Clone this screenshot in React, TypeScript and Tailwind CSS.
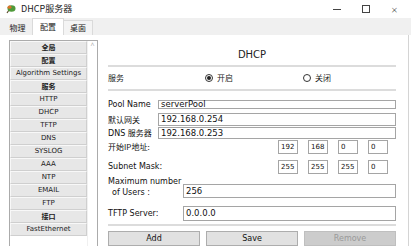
const latin = "font-['DejaVu_Sans','Noto_Sans_CJK_SC',sans-serif]";
const cjk = "font-['Noto_Sans_CJK_SC','DejaVu_Sans',sans-serif]";

const menu = [
  { label: "全局", bold: true },
  { label: "配置", bold: true },
  { label: "Algorithm Settings" },
  { label: "服务", bold: true },
  { label: "HTTP" },
  { label: "DHCP" },
  { label: "TFTP" },
  { label: "DNS" },
  { label: "SYSLOG" },
  { label: "AAA" },
  { label: "NTP" },
  { label: "EMAIL" },
  { label: "FTP" },
  { label: "接口", bold: true },
  { label: "FastEthernet" },
];

const Radio = ({ checked, label }: { checked?: boolean; label: string }) => (
  <div className="flex items-center gap-[4px]">
    <span className="w-[8px] h-[8px] rounded-full border border-[#333] flex items-center justify-center">
      {checked && <span className="w-[4px] h-[4px] rounded-full bg-[#222]" />}
    </span>
    <span className={`${cjk} text-[8px] leading-[10px] text-[#222]`}>{label}</span>
  </div>
);

const Field = ({ value, h }: { value: string; h: string }) => (
  <div
    className={`flex-1 ${h} border border-[#a5a5a5] bg-white flex items-center pl-[2px] text-[8.5px] text-[#111] ${latin} overflow-visible whitespace-nowrap`}
  >
    {value}
  </div>
);

const Octet = ({ value }: { value: string }) => (
  <div className={`w-[20px] h-[14px] border border-[#a5a5a5] bg-white flex items-center pl-[2px] text-[7px] text-[#111] ${latin}`}>
    {value}
  </div>
);

const Button = ({ label, disabled }: { label: string; disabled?: boolean }) => (
  <div
    className={`h-[15px] flex items-center justify-center text-[8px] ${latin} border ${
      disabled
        ? "bg-[#cccccc] border-[#bfbfbf] text-[#9a9a9a]"
        : "bg-[#e1e1e1] border-[#adadad] text-[#111]"
    }`}
  >
    {label}
  </div>
);

export default function App() {
  return (
    <div className="w-[411px] h-[246px] overflow-hidden bg-white flex flex-col">
      {/* title bar */}
      <div className="h-[18px] flex items-center shrink-0">
        <svg width="11" height="11" viewBox="0 0 11 11" className="ml-[5px]">
          <path d="M2 9 L4 6" stroke="#5a4a2a" strokeWidth="1.2" />
          <ellipse cx="6.5" cy="4.5" rx="4" ry="3.3" fill="#4f9a3a" />
          <ellipse cx="4.5" cy="3.2" rx="2" ry="1.6" fill="#d9742a" />
        </svg>
        <span className={`${cjk} ml-[5px] text-[9px] text-[#222]`}>DHCP服务器</span>
        <div className="ml-auto flex items-center text-[#444]">
          <span className="w-[29px] flex justify-center">
            <span className="w-[8px] h-px bg-[#444]" />
          </span>
          <span className="w-[29px] flex justify-center">
            <span className="w-[8px] h-[8px] border border-[#444]" />
          </span>
          <span className="w-[29px] mr-[2px] flex justify-center text-[11px] leading-none font-light">×</span>
        </div>
      </div>

      {/* tabs */}
      <div className="h-[17px] shrink-0 bg-[#f0f0f0] flex items-end pl-[3px]">
        <div className={`${cjk} w-[29px] h-[15px] flex items-center justify-center text-[8px] text-[#222]`}>物理</div>
        <div className={`${cjk} w-[32px] h-[17px] bg-white border-x border-t border-[#dadada] flex items-center justify-center text-[8px] text-[#222]`}>
          配置
        </div>
        <div className={`${cjk} w-[29px] h-[15px] border-r border-t border-[#dadada] bg-[#f4f4f4] flex items-center justify-center text-[8px] text-[#222]`}>
          桌面
        </div>
      </div>

      {/* content */}
      <div className="flex-1 flex w-[409px] border-r border-[#d4d4d4]">
        {/* menu list */}
        <div className="pl-[9px] pt-[5px]">
          <div className="w-[89px] h-[220px] border border-[#ababab] flex">
            <div className="w-[77px] flex flex-col">
              {menu.map((m) => (
                <div
                  key={m.label}
                  className={`h-[13px] bg-[#e7e7e7] border border-t-[#f8f8f8] border-l-[#f8f8f8] border-b-[#cfcfcf] border-r-[#cfcfcf] flex items-center justify-center text-[7px] leading-none text-[#222] whitespace-nowrap ${
                    m.bold ? `${cjk} font-bold` : latin
                  }`}
                >
                  {m.label}
                </div>
              ))}
            </div>
            <div className="flex-1 flex justify-center pt-[1px] text-[7px] text-[#aaa] leading-none border-l border-[#f0f0f0]">
              ^
            </div>
          </div>
        </div>

        {/* DHCP form */}
        <div className="ml-[10px] w-[288px] flex flex-col">
          <div className="h-[32px] pt-[14px] border-b-2 border-[#dcdcdc] flex justify-center">
            <span className={`${latin} text-[10px] leading-[12px] text-[#222]`}>DHCP</span>
          </div>

          <div className="h-[24px] border-b-2 border-[#dcdcdc] flex items-center">
            <span className={`${cjk} w-[97px] text-[8px] text-[#222]`}>服务</span>
            <div className="w-[98px]">
              <Radio checked label="开启" />
            </div>
            <Radio label="关闭" />
          </div>

          <div className="mt-[9px] h-[9px] flex items-center">
            <span className={`${latin} w-[50px] text-[8px] text-[#111] whitespace-nowrap`}>Pool Name</span>
            <Field value="serverPool" h="h-[9px]" />
          </div>

          <div className="mt-[4px] h-[13px] flex items-center">
            <span className={`${cjk} w-[50px] text-[8px] text-[#111]`}>默认网关</span>
            <Field value="192.168.0.254" h="h-[13px]" />
          </div>

          <div className="mt-[1px] h-[12px] flex items-center">
            <span className={`${latin} w-[50px] text-[8px] text-[#111] whitespace-nowrap`}>
              DNS <span className={cjk}>服务器</span>
            </span>
            <Field value="192.168.0.253" h="h-[12px]" />
          </div>

          <div className="mt-[1px] h-[14px] flex items-center">
            <span className={`${cjk} text-[8px] text-[#111]`}>开始IP地址:</span>
            <div className="ml-auto mr-[8px] flex gap-[10px]">
              <Octet value="192" />
              <Octet value="168" />
              <Octet value="0" />
              <Octet value="0" />
            </div>
          </div>

          <div className="mt-[6px] h-[14px] flex items-center">
            <span className={`${latin} text-[8px] text-[#111]`}>Subnet Mask:</span>
            <div className="ml-auto mr-[8px] flex gap-[10px]">
              <Octet value="255" />
              <Octet value="255" />
              <Octet value="255" />
              <Octet value="0" />
            </div>
          </div>

          <div className="mt-[1px] h-[23px] flex items-end">
            <span className={`${latin} w-[75px] text-[8px] leading-[11px] text-[#111]`}>
              Maximum number
              <br />
              <span className="pl-[4px]">of Users :</span>
            </span>
            <Field value="256" h="h-[14px]" />
          </div>

          <div className="mt-[8px] h-[15px] flex items-center">
            <span className={`${latin} w-[75px] text-[8px] text-[#111]`}>TFTP Server:</span>
            <Field value="0.0.0.0" h="h-[15px]" />
          </div>

          <div className="mt-[3px] h-[2px] bg-[#dcdcdc]" />

          <div className="mt-[5px] grid grid-cols-3 gap-[6px]">
            <Button label="Add" />
            <Button label="Save" />
            <Button label="Remove" disabled />
          </div>
        </div>
      </div>
    </div>
  );
}
